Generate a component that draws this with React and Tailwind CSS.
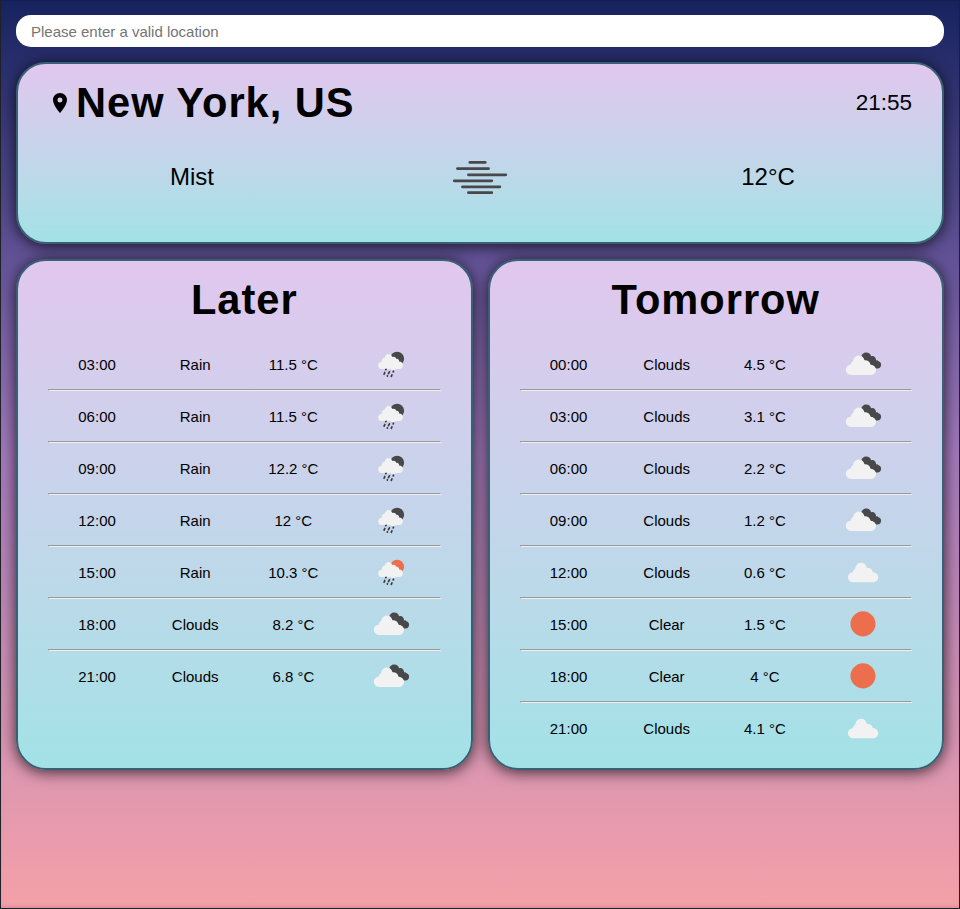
import React from "react";

const later = [
  ["03:00", "Rain", "11.5 °C", "rainNight"],
  ["06:00", "Rain", "11.5 °C", "rainNight"],
  ["09:00", "Rain", "12.2 °C", "rainNight"],
  ["12:00", "Rain", "12 °C", "rainNight"],
  ["15:00", "Rain", "10.3 °C", "rainDay"],
  ["18:00", "Clouds", "8.2 °C", "broken"],
  ["21:00", "Clouds", "6.8 °C", "broken"],
];

const tomorrow = [
  ["00:00", "Clouds", "4.5 °C", "broken"],
  ["03:00", "Clouds", "3.1 °C", "broken"],
  ["06:00", "Clouds", "2.2 °C", "broken"],
  ["09:00", "Clouds", "1.2 °C", "broken"],
  ["12:00", "Clouds", "0.6 °C", "cloud"],
  ["15:00", "Clear", "1.5 °C", "sun"],
  ["18:00", "Clear", "4 °C", "sun"],
  ["21:00", "Clouds", "4.1 °C", "cloud"],
];

const DARK = "#48484a";
const ORANGE = "#ec6e4c";
const CLOUD =
  "M5.3 19.5C2.3 19.5 0 17.2 0 14.4C0 11.6 2.3 9.4 5 9.4C5.1 7.6 6 6.3 7.3 5.6C7.8 2.3 10 0 13 0C15.8 0 18 1.9 18.7 4.9C21.8 4.6 24.3 6.6 24.9 9.5C27.9 9.3 30.2 11.7 30.2 14.5C30.2 17.3 28 19.5 25.1 19.5Z";

function Rain({ back }) {
  return (
    <g transform="translate(0.8 0.8)">
      <circle cx="30.3" cy="18.9" r="7" fill={back} />
      <path
        fill="#f2f2f2"
        d="M15.4 29.3C13.1 29.3 11.3 27.7 11.3 25.6C11.3 23.5 13 22 15.1 22C14.7 19.7 16 17.9 18 17.8C18.4 15.6 20 14.2 21.9 14.3C23.6 14.3 24.8 15.4 25.4 17.2C27.3 16.4 29 17.3 29.4 19C31.2 18.7 32.4 19.9 32.3 21.6C34.7 21.5 36.2 23.4 36.2 25.4C36.2 27.7 34.5 29.3 32.2 29.3L29.3 29.1C28 30.4 25.4 30.6 23.5 29.3Z"
      />
      <g stroke="#3c3c40" strokeWidth="1.7" strokeLinecap="round">
        <path d="M19.2 29.5L19 29.9M18 32.7L17.3 34.3M22.6 32L21.7 33.7M26.7 31.4L26.4 32.1M20.7 35.9L20.5 36.3M25.1 35.1L24.5 36.5" />
      </g>
    </g>
  );
}

function Broken() {
  return (
    <g transform="translate(0.8 0)">
      <path
        fill={DARK}
        d="M22.2 18.5C22.6 15.4 24.6 13.4 27.4 13.4C29.9 13.4 31.9 14.8 32.3 17.2C34.5 16.2 37.2 17.8 37.3 21.4C38.5 21.2 39.3 21.6 39.7 22.2C41.3 22.6 42.3 24.1 42.3 25.8C42.3 28 40.8 29.6 38.7 29.6C37 29.6 35.6 28.6 34.9 27L28 24Z"
      />
      <path transform="translate(7 16.4)" d={CLOUD} fill="#f2f2f2" />
    </g>
  );
}

function WeatherIcon({ type }) {
  return (
    <svg width="50" height="50" viewBox="0 0 50 50" className="block">
      {type === "rainNight" && <Rain back={DARK} />}
      {type === "rainDay" && <Rain back={ORANGE} />}
      {type === "broken" && <Broken />}
      {type === "cloud" && (
        <path transform="translate(10 15.8)" d={CLOUD} fill="#f2f2f2" />
      )}
      {type === "sun" && (
        <path
          fill={ORANGE}
          d="M25 12.3C28 12.3 31 13.4 33.4 15.7C35.8 17.7 37.6 21.5 37.6 24.9C37.6 28.3 35.8 32 33.4 34.1C31 36.4 28 37.5 25 37.5C22 37.5 19 36.4 16.6 34.1C14.2 32 12.4 28.3 12.4 24.9C12.4 21.5 14.2 17.7 16.6 15.7C19 13.4 22 12.3 25 12.3Z"
        />
      )}
    </svg>
  );
}

function MistIcon() {
  return (
    <svg width="100" height="100" viewBox="0 0 100 100" className="block">
      <path
        d="M39.8 35.4H55.3M27.4 41.6H58.6M38.4 47.8H75.8M24.2 53.8H61.8M32.4 59.8H69.9M38.4 65.7H61.8"
        stroke="#48484a"
        strokeWidth="2.7"
        strokeLinecap="round"
      />
    </svg>
  );
}

function Card({ className, children }) {
  return (
    <section
      className={`rounded-[30px] border-2 border-[#3a6073] bg-linear-to-b from-[#e1c7ee] to-[#a2e2e7] px-[30px] shadow-[0_2px_15px_rgba(0,0,0,0.75)] ${className}`}
    >
      {children}
    </section>
  );
}

function Forecast({ title, rows }) {
  return (
    <Card className="h-[511px] min-w-0 flex-1">
      <h2 className="mt-[14px] mb-[15px] text-center text-[41.6px] leading-[49px] font-bold tracking-[1px]">
        {title}
      </h2>
      {rows.map(([time, sky, temp, icon], i) => (
        <React.Fragment key={time}>
          {i > 0 && (
            <hr className="h-[2px] border border-t-[#9a9a9a] border-r-[#eeeeee] border-b-[#eeeeee] border-l-[#9a9a9a]" />
          )}
          <div className="grid h-[50px] grid-cols-4 items-center justify-items-center text-[15px] leading-[22px]">
            <span className="pt-[2px]">{time}</span>
            <span className="pt-[2px]">{sky}</span>
            <span className="pt-[2px]">{temp}</span>
            <WeatherIcon type={icon} />
          </div>
        </React.Fragment>
      ))}
    </Card>
  );
}

export default function App() {
  return (
    <main className="flex h-[909px] w-full flex-col overflow-hidden border border-t-[#16204e] border-r-[#202028] border-b-[#202028] border-l-[#202028] bg-[linear-gradient(180deg,#16235e_0%,#665599_30%,#a279ba_50%,#dd97b0_85%,#f5a0a8_100%)] px-[15px] pt-[14px] font-['Liberation_Sans',Arial,sans-serif] text-black shadow-[inset_0_-3px_4px_-2px_rgba(0,0,0,0.15)]">
      <input
        className="h-8 w-full shrink-0 rounded-[15px] bg-white px-[15px] text-[15px] outline-none placeholder:text-[#757575]"
        placeholder="Please enter a valid location"
      />
      <Card className="mt-[15px] h-[182px] shrink-0">
        <header className="mt-[14px] flex h-[49px] items-center justify-between">
          <div className="flex items-center">
            <svg width="24" height="24" viewBox="0 0 24 24" className="mr-1 block">
              <path d="M12 2C8.13 2 5 5.13 5 9c0 5.25 7 13 7 13s7-7.75 7-13c0-3.87-3.13-7-7-7zm0 9.5a2.5 2.5 0 1 1 0-5 2.5 2.5 0 0 1 0 5z" />
            </svg>
            <h1 className="text-[41.6px] leading-[49px] font-bold tracking-[1px]">
              New York, US
            </h1>
          </div>
          <time className="text-[22.5px]">21:55</time>
        </header>
        <div className="grid h-[100px] grid-cols-3 items-center justify-items-center text-2xl">
          <span>Mist</span>
          <MistIcon />
          <span>12°C</span>
        </div>
      </Card>
      <div className="mt-[15px] flex gap-[15px]">
        <Forecast title="Later" rows={later} />
        <Forecast title="Tomorrow" rows={tomorrow} />
      </div>
    </main>
  );
}
